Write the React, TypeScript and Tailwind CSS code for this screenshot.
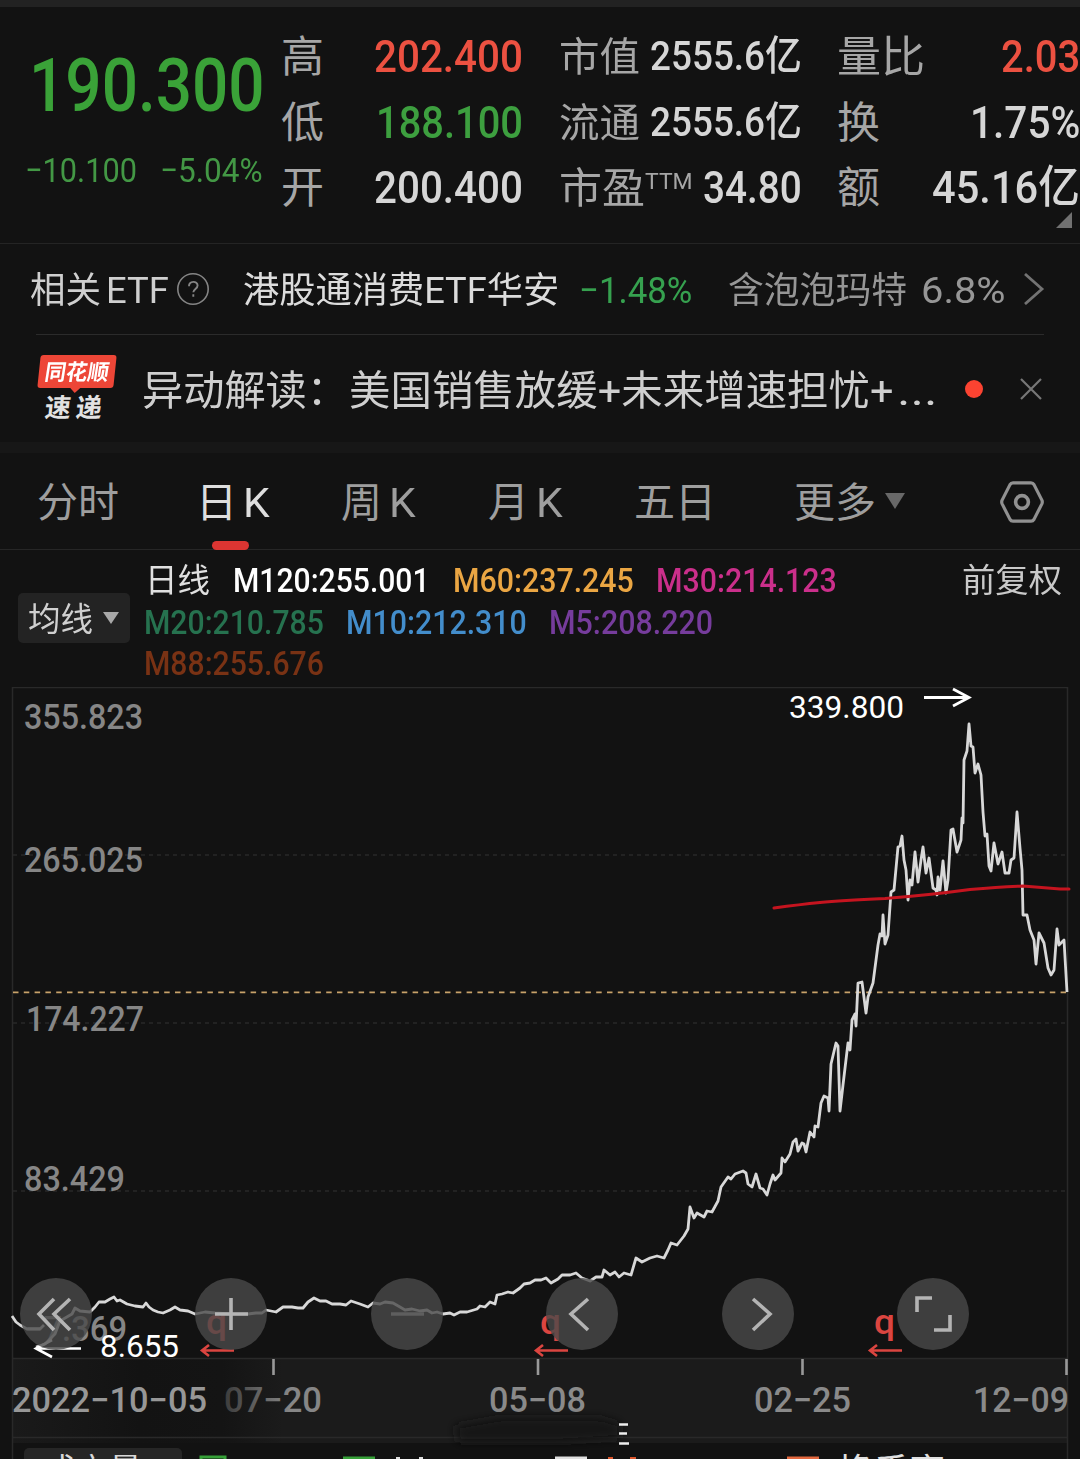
import { useLayoutEffect, useRef, useState } from 'react';
import type { ReactNode } from 'react';
import { clsx } from 'clsx';

type TextProps = {
  className?: string;
  children: ReactNode;
};

// Condenses (or widens) one line of text so that it fills the width of its box.
function Fit({ className, children }: TextProps) {
  const box = useRef<HTMLSpanElement>(null);
  const text = useRef<HTMLSpanElement>(null);
  const [scale, setScale] = useState(1);

  useLayoutEffect(() => {
    if (box.current && text.current) {
      setScale(box.current.clientWidth / text.current.offsetWidth);
    }
  }, [children]);

  return (
    <span ref={box} className={clsx('block shrink-0 whitespace-nowrap', className)}>
      <span ref={text} className="inline-block origin-left" style={{ transform: `scaleX(${scale})` }}>
        {children}
      </span>
    </span>
  );
}

type Quote = {
  label: string;
  labelClass: string;
  sup?: string;
  value: string;
  valueClass: string;
};

const prices: Quote[] = [
  { label: '高', labelClass: 'w-[43px] text-[43px]', value: '202.400', valueClass: 'w-[149px] text-[45px] text-[#ec5141]' },
  { label: '低', labelClass: 'w-[43px] text-[43px]', value: '188.100', valueClass: 'w-[147px] text-[45px] text-[#3d9f3f]' },
  { label: '开', labelClass: 'w-[43px] text-[43px]', value: '200.400', valueClass: 'w-[149px] text-[45px] text-[#d6d6d6]' }
];

const caps: Quote[] = [
  { label: '市值', labelClass: 'w-[81px] text-[40px]', value: '2555.6亿', valueClass: 'w-[152px] text-[41px] text-[#d6d6d6]' },
  { label: '流通', labelClass: 'w-[81px] text-[40px]', value: '2555.6亿', valueClass: 'w-[152px] text-[41px] text-[#d6d6d6]' },
  { label: '市盈', labelClass: 'w-[86px] text-[42px]', sup: 'TTM', value: '34.80', valueClass: 'w-[99px] text-[45px] text-[#d6d6d6]' }
];

const volumes: Quote[] = [
  { label: '量比', labelClass: 'w-[88px] text-[43px]', value: '2.03', valueClass: 'w-[79px] text-[45px] text-[#ec5141]' },
  { label: '换', labelClass: 'w-[43px] text-[43px]', value: '1.75%', valueClass: 'w-[110px] text-[45px] text-[#d6d6d6]' },
  { label: '额', labelClass: 'w-[43px] text-[43px]', value: '45.16亿', valueClass: 'w-[148px] text-[45px] text-[#d6d6d6]' }
];

function QuoteColumn({ items, className }: { items: Quote[]; className: string }) {
  return (
    <div className={clsx('flex flex-col', className)}>
      {items.map((item) => (
        <div key={item.label} className="flex h-[65.5px] items-center leading-[65px]">
          <Fit className={clsx('pt-0.5 text-[#a6a6a6]', item.labelClass)}>{item.label}</Fit>
          {item.sup && <Fit className="-mt-3 w-[48px] text-[22px] text-[#a6a6a6]">{item.sup}</Fit>}
          <Fit className={clsx('ml-auto font-medium', item.valueClass)}>{item.value}</Fit>
        </div>
      ))}
    </div>
  );
}

function Header() {
  return (
    <section className="relative flex h-[237px] border-b border-[#242424] pt-[17px]">
      <div className="w-[280px] pt-3">
        <Fit className="ml-[29px] h-[98px] w-[236px] text-[75px] leading-[98px] font-medium text-[#3aa238]">190.300</Fit>
        <div className="mt-[12px] flex text-[34px] leading-[48px] text-[#439845]">
          <Fit className="ml-[25px] w-[112px]">−10.100</Fit>
          <Fit className="ml-[23px] w-[103px]">−5.04%</Fit>
        </div>
      </div>
      <QuoteColumn items={prices} className="ml-px w-[242px]" />
      <QuoteColumn items={caps} className="ml-[36px] w-[243px]" />
      <QuoteColumn items={volumes} className="ml-[35px] w-[243px]" />
      <svg className="absolute top-[205px] left-[1056px] h-4 w-4" viewBox="0 0 16 16">
        <path d="M16 0V16H0Z" fill="#717171" />
      </svg>
    </section>
  );
}

function EtfRow() {
  return (
    <section className="flex h-[90px] items-center pl-[30px] text-[36px] leading-[60px] text-[#cfcfcf] [&>span]:pt-[3px]">
      <Fit className="w-[71px]">相关</Fit>
      <Fit className="ml-[5px] w-[63px] text-[37px]">ETF</Fit>
      <svg className="ml-[7px] h-[34px] w-[34px]" viewBox="0 0 34 34" fill="none" stroke="#858585" strokeWidth="1.6">
        <circle cx="17" cy="17" r="15.2" />
        <path d="M13 14.2c0-5.8 8.6-5.6 8.6-.7 0 3.2-4.3 3.6-4.3 6.8M17.3 22.3v2.4" strokeWidth="1.9" />
      </svg>
      <Fit className="ml-[33px] w-[316px] text-[#dcdcdc]">港股通消费ETF华安</Fit>
      <Fit className="ml-[20px] w-[113px] text-[37px] text-[#36a14f]">−1.48%</Fit>
      <Fit className="ml-[36px] w-[179px] text-[#969696]">含泡泡玛特</Fit>
      <Fit className="ml-[14px] w-[84px] text-[37px] text-[#969696]">6.8%</Fit>
      <svg className="ml-[18px] h-8 w-[22px]" viewBox="0 0 22 32" fill="none" stroke="#737373" strokeWidth="2.8">
        <path d="M2 1L19 16L2 31" />
      </svg>
    </section>
  );
}

function NewsRow() {
  return (
    <section className="mx-[36px] flex h-[108px] items-center border-t border-[#2b2b2b] [&>span]:pt-1">
      <div className="flex h-[68px] w-[81px] flex-col font-bold">
        <div className="relative ml-[3px] h-[33px] w-[76px] -skew-x-6 rounded-[3px] bg-[#ed4637] pl-[6px] text-[22px] leading-[35px] text-white">
          <Fit className="w-[64px] -skew-x-3">同花顺</Fit>
          <svg className="absolute top-[32px] left-[32px] h-[6px] w-3" viewBox="0 0 12 6">
            <path d="M0 0H12L6 6Z" fill="#ed4637" />
          </svg>
        </div>
        <div className="mt-[6px] ml-[9px] flex -skew-x-6 gap-[5px] text-[26px] leading-[29px] text-[#e2e2e2]">
          <span>速</span>
          <span>递</span>
        </div>
      </div>
      <Fit className="ml-[25px] w-[206px] text-[41px] leading-[70px] text-[#cfcfcf]">异动解读：</Fit>
      <Fit className="ml-px w-[545px] text-[41px] leading-[70px] text-[#cfcfcf]">美国销售放缓+未来增速担忧+</Fit>
      <Fit className="ml-[3px] w-[40px] text-[41px] leading-[70px] text-[#cfcfcf]">...</Fit>
      <span className="ml-[28px] h-[18px] w-[18px] rounded-full bg-[#fb4331]" />
      <svg className="ml-[37px] h-[22px] w-[22px]" viewBox="0 0 22 22" stroke="#777" strokeWidth="2.2">
        <path d="M1 1L21 21M21 1L1 21" />
      </svg>
    </section>
  );
}

const tabs = [
  { left: '分时', right: '', box: 'ml-[37px] w-[84px]' },
  { left: '日', right: 'K', box: 'ml-[75px] w-[74px]', active: true },
  { left: '周', right: 'K', box: 'ml-[71px] w-[75px]' },
  { left: '月', right: 'K', box: 'ml-[72px] w-[75px]' },
  { left: '五日', right: '', box: 'ml-[71px] w-[84px]' },
  { left: '更多', right: '', box: 'ml-[76px] w-[84px]' }
];

function Tabs() {
  return (
    <nav className="flex h-[97px] items-center border-b border-[#262626] text-[41px] leading-[60px] text-[#9e9e9e] [&>div]:pt-[3px]">
      {tabs.map((tab) => (
        <div key={tab.left} className={clsx('relative flex shrink-0 items-center justify-between', tab.box, tab.active && 'text-[#dedede]')}>
          <span>{tab.left}</span>
          {tab.right && <Fit className="w-[27px]">{tab.right}</Fit>}
          {tab.active && <span className="absolute top-[71px] left-[16px] h-[9px] w-[37px] rounded-full bg-[#dc3532]" />}
        </div>
      ))}
      <svg className="ml-[7px] h-4 w-5" viewBox="0 0 20 16">
        <path d="M0 0H20L10 16Z" fill="#686868" />
      </svg>
      <svg className="mt-[2px] ml-[95px] h-[42px] w-[44px]" viewBox="0 0 44 42" fill="none" stroke="#919191" strokeWidth="3.2" strokeLinejoin="round">
        <path d="M13 1.8H31Q33 1.8 34 3.6L42 19.4Q42.6 21 42 22.6L34 38.4Q33 40.2 31 40.2H13Q11 40.2 10 38.4L2 22.6Q1.4 21 2 19.4L10 3.6Q11 1.8 13 1.8Z" />
        <circle cx="22" cy="21" r="6.4" strokeWidth="3.6" />
      </svg>
    </nav>
  );
}

function Averages() {
  return (
    <section className="flex h-[137px] text-[33px] leading-[41.5px]">
      <button className="mt-[43px] ml-[18px] flex h-[50px] w-[112px] items-center rounded-[5px] bg-[#232323] pl-[10px] text-[#d0d0d0]">
        <Fit className="w-[65px] pt-[3px]">均线</Fit>
        <svg className="ml-[10px] h-3 w-4" viewBox="0 0 16 12">
          <path d="M0 0H16L8 12Z" fill="#a8a8a8" />
        </svg>
      </button>
      <div className="mt-[10px] ml-[14px] flex w-[800px] flex-col">
        <div className="flex">
          <Fit className="ml-px w-[65px] text-[#e0e0e0]">日线</Fit>
          <Fit className="ml-[23px] w-[197px] font-medium text-white">M120:255.001</Fit>
          <Fit className="ml-[23px] w-[181px] font-medium text-[#eba643]">M60:237.245</Fit>
          <Fit className="ml-[22px] w-[181px] font-medium text-[#cb2f8b]">M30:214.123</Fit>
        </div>
        <div className="flex">
          <Fit className="w-[180px] font-medium text-[#26724f]">M20:210.785</Fit>
          <Fit className="ml-[22px] w-[181px] font-medium text-[#438dcb]">M10:212.310</Fit>
          <Fit className="ml-[22px] w-[164px] font-medium text-[#763c9c]">M5:208.220</Fit>
        </div>
        <Fit className="w-[180px] font-medium text-[#793214]">M88:255.676</Fit>
      </div>
      <Fit className="mt-[10px] ml-[18px] w-[100px] text-[#c9c9c9]">前复权</Fit>
    </section>
  );
}

const priceLine =
  '12,1316 16,1322 20,1325 27,1329 40,1329 44,1325 M36,1347 45,1344 55,1334 60,1321 72,1314 75,1308 80,1311 90,1312 95,1307 99,1302 105,1302 110,1299 114,1297 117,1301 120,1300 127,1304 135,1306 143,1307 146,1303 149,1307 153,1310 158,1312 163,1313 170,1310 175,1307 180,1310 188,1311 195,1314 205,1312 215,1313 230,1314 248,1314 256,1313 262,1313 266,1310 276,1312 283,1307 292,1307 298,1308 303,1308 308,1302 314,1298 320,1301 326,1301 332,1304 340,1304 346,1305 351,1301 360,1304 368,1307 373,1303 380,1304 385,1302 393,1303 400,1307 405,1310 412,1309 420,1311 427,1310 432,1313 437,1312 443,1314 450,1313 454,1315 460,1312 467,1312 477,1309 480,1306 485,1307 490,1302 495,1304 497,1295 502,1294 508,1292 513,1293 520,1288 524,1284 530,1283 535,1280 541,1280 546,1278 551,1283 558,1279 562,1275 570,1275 576,1273 582,1278 590,1281 596,1277 602,1277 604,1270 610,1275 615,1272 619,1277 624,1273 631,1275 636,1258 642,1262 650,1258 657,1256 664,1258 668,1250 671,1243 677,1245 684,1236 688,1229 690,1207 694,1218 697,1213 704,1217 707,1211 712,1212 718,1201 721,1187 728,1177 731,1179 735,1174 743,1171 746,1173 748,1184 752,1187 756,1174 760,1188 763,1189 767,1195 770,1184 773,1175 775,1180 781,1173 782,1158 785,1162 790,1154 793,1142 796,1139 798,1151 802,1143 804,1144 806,1152 810,1132 814,1137 815,1126 818,1127 821,1103 824,1096 828,1098 829,1111 831,1064 836,1043 838,1046 840,1111 843,1085 848,1043 850,1050 852,1020 855,1014 856,1026 858,983 862,982 866,1013 868,997 873,983 878,945 880,934 882,936 883,915 885,944 888,935 891,892 894,890 898,847 900,846 902,836 904,860 906,870 908,900 910,880 912,885 915,852 918,882 921,860 923,847 926,873 929,858 933,888 936,890 937,895 938,877 940,890 943,861 946,893 948,880 951,830 953,829 957,852 961,840 962,818 963,823 964,760 967,751 969,724 971,746 973,747 975,773 978,764 981,775 983,812 985,836 987,834 989,866 991,871 994,843 998,864 1002,852 1005,873 1009,873 1011,860 1014,858 1017,812 1020,848 1022,870 1023,915 1027,915 1030,930 1034,940 1036,964 1039,933 1044,943 1048,968 1051,975 1054,970 1057,929 1059,945 1064,940 1067,992';

const yLabels = [
  { text: '355.823', x: 24, y: 728.5, width: 119 },
  { text: '265.025', x: 24, y: 871.5, width: 119 },
  { text: '174.227', x: 26, y: 1030.5, width: 118 },
  { text: '83.429', x: 24, y: 1190.5, width: 101 },
  { text: '−7.369', x: 25, y: 1341, width: 102 }
];

const dates = [
  { text: '2022−10−05', x: 12, width: 195, fill: '#979797' },
  { text: '07−20', x: 224, width: 98, fill: 'url(#dateFade)' },
  { text: '05−08', x: 489, width: 97, fill: '#8a8a8a' },
  { text: '02−25', x: 754, width: 97, fill: '#8a8a8a' },
  { text: '12−09', x: 973, width: 96, fill: '#8a8a8a' }
];

const buttonIcons = [
  'M54 21L39 36L54 52M70 21L54 36L70 52',
  'M20 36H53M36 20V52',
  'M20 36H53',
  'M42 21L25 36L42 52',
  'M31 21L48 36L31 52',
  'M20 34V20H35M37 52H53V37'
];

function Chart() {
  return (
    <section className="relative h-[772px] overflow-hidden">
      <svg className="block h-[772px] w-[1080px]" viewBox="0 687 1080 772" fill="none">
        <defs>
          <linearGradient id="axisFade" gradientUnits="userSpaceOnUse" x1="13" x2="330" y1="0" y2="0">
            <stop offset="0" stopColor="#1a1a1a" />
            <stop offset="0.4" stopColor="#131313" />
            <stop offset="0.66" stopColor="#141414" />
            <stop offset="0.85" stopColor="#1b1b1b" />
          </linearGradient>
          <linearGradient id="dateFade" gradientUnits="userSpaceOnUse" x1="224" x2="290" y1="0" y2="0">
            <stop offset="0" stopColor="#3c3c3c" />
            <stop offset="1" stopColor="#868686" />
          </linearGradient>
          <filter id="smudge" x="-20%" y="-80%" width="140%" height="260%">
            <feGaussianBlur stdDeviation="5" />
          </filter>
        </defs>

        <rect x="13" y="1358" width="1055" height="85" fill="url(#axisFade)" />
        <path d="M12.5 1459V687.5H1067.5V1459M12 1358.5H1068M12 1437.5H1068" stroke="#292929" strokeWidth="1.5" />
        <path d="M13 855H1067M13 1023H1067M13 1191H1067" stroke="#292929" strokeWidth="1.5" strokeDasharray="4 4" />
        <path d="M13 992.3H1067" stroke="#c8a26a" strokeWidth="1.8" strokeDasharray="5.5 5.3" />

        <g fill="#868686" fontSize="35" fontWeight="500">
          {yLabels.map((label) => (
            <text key={label.text} x={label.x} y={label.y} textLength={label.width} lengthAdjust="spacingAndGlyphs">
              {label.text}
            </text>
          ))}
        </g>

        <path d={`M${priceLine}`} stroke="#d8d8d8" strokeWidth="2.8" strokeLinejoin="round" />
        <path d="M774 908Q800 904.500 820 902.500T885 898.500Q930 895 970 889.500Q1000 887 1023 886L1060 889H1069" stroke="#c5141f" strokeWidth="3" strokeLinecap="round" />

        <text x="789" y="717.500" fill="#fff" fontSize="32" textLength="115" lengthAdjust="spacingAndGlyphs">339.800</text>
        <path d="M924 697.500H968M953 689L969 697.500L953 706" stroke="#fff" strokeWidth="2.8" />
        <text x="100" y="1357" fill="#fff" fontSize="32" textLength="79" lengthAdjust="spacingAndGlyphs">8.655</text>
        <path d="M81 1348.500H37M52 1340L36 1348.500L52 1357" stroke="#fff" strokeWidth="2.6" />

        {[201, 535, 869].map((x) => (
          <g key={x}>
            <text x={x + 5} y="1334" fill="#db4540" fontSize="35" fontWeight="500" textLength="21" lengthAdjust="spacingAndGlyphs">q</text>
            <path d={`M${x + 33} 1350.500H${x + 2}M${x + 8} 1345L${x + 1} 1350.500L${x + 8} 1356`} stroke="#db4540" strokeWidth="2.6" />
          </g>
        ))}

        <path d="M273.500 1359V1375M538 1359V1375M802.500 1359V1375M1066.500 1359V1375" stroke="#999" strokeWidth="2.6" />
        <g fontSize="35" fontWeight="500">
          {dates.map((date) => (
            <text key={date.text} x={date.x} y="1412" fill={date.fill} textLength={date.width} lengthAdjust="spacingAndGlyphs">
              {date.text}
            </text>
          ))}
        </g>

        <path d="M455 1426L500 1418H600L620 1424V1438L560 1442H458Z" fill="#161616" filter="url(#smudge)" />
        <path d="M619 1424.500H628M619 1433.500H627M619 1443.500H629" stroke="#eee" strokeWidth="2.4" />

        <rect x="24" y="1448" width="158" height="40" rx="5" fill="#262626" />
        <g fontSize="34">
          <text x="43" y="1483" fill="#d8d8d8" textLength="99" lengthAdjust="spacingAndGlyphs">成交量</text>
          <text x="838" y="1483" fill="#e0e0e0" textLength="107" lengthAdjust="spacingAndGlyphs">换手率</text>
        </g>
        <path d="M201 1459V1457H225V1459" stroke="#36a038" strokeWidth="3" />
        <path d="M343 1458H375" stroke="#36a038" strokeWidth="3" />
        <path d="M555 1458H587" stroke="#e0e0e0" strokeWidth="3" />
        <path d="M787 1458H819" stroke="#e3683f" strokeWidth="3" />
        <path d="M396 1458H400M419 1458H423" stroke="#ddd" strokeWidth="2" />
        <path d="M608 1458H613M630 1458H636" stroke="#db562c" strokeWidth="2" />
      </svg>

      <div className="absolute top-[591px] left-5 flex gap-[103.4px]">
        {buttonIcons.map((icon, index) => (
          <button key={icon} className="h-[72px] w-[72px] rounded-full bg-[#4a4a4a]/80">
            <svg viewBox={index === 0 ? '20 0 72 72' : '0 0 72 72'} fill="none" stroke={index === 2 ? '#5e5e5e' : '#b4b4b4'} strokeWidth="3.6">
              <path d={icon} />
            </svg>
          </button>
        ))}
      </div>
    </section>
  );
}

export default function App() {
  return (
    <main className="h-[1459px] w-[1080px] overflow-hidden bg-[#121212] font-['Roboto','Noto_Sans_CJK_SC',sans-serif]">
      <div className="h-[7px] bg-[#222]" />
      <Header />
      <EtfRow />
      <NewsRow />
      <div className="h-[11px] bg-[#171717]" />
      <Tabs />
      <Averages />
      <Chart />
    </main>
  );
}
